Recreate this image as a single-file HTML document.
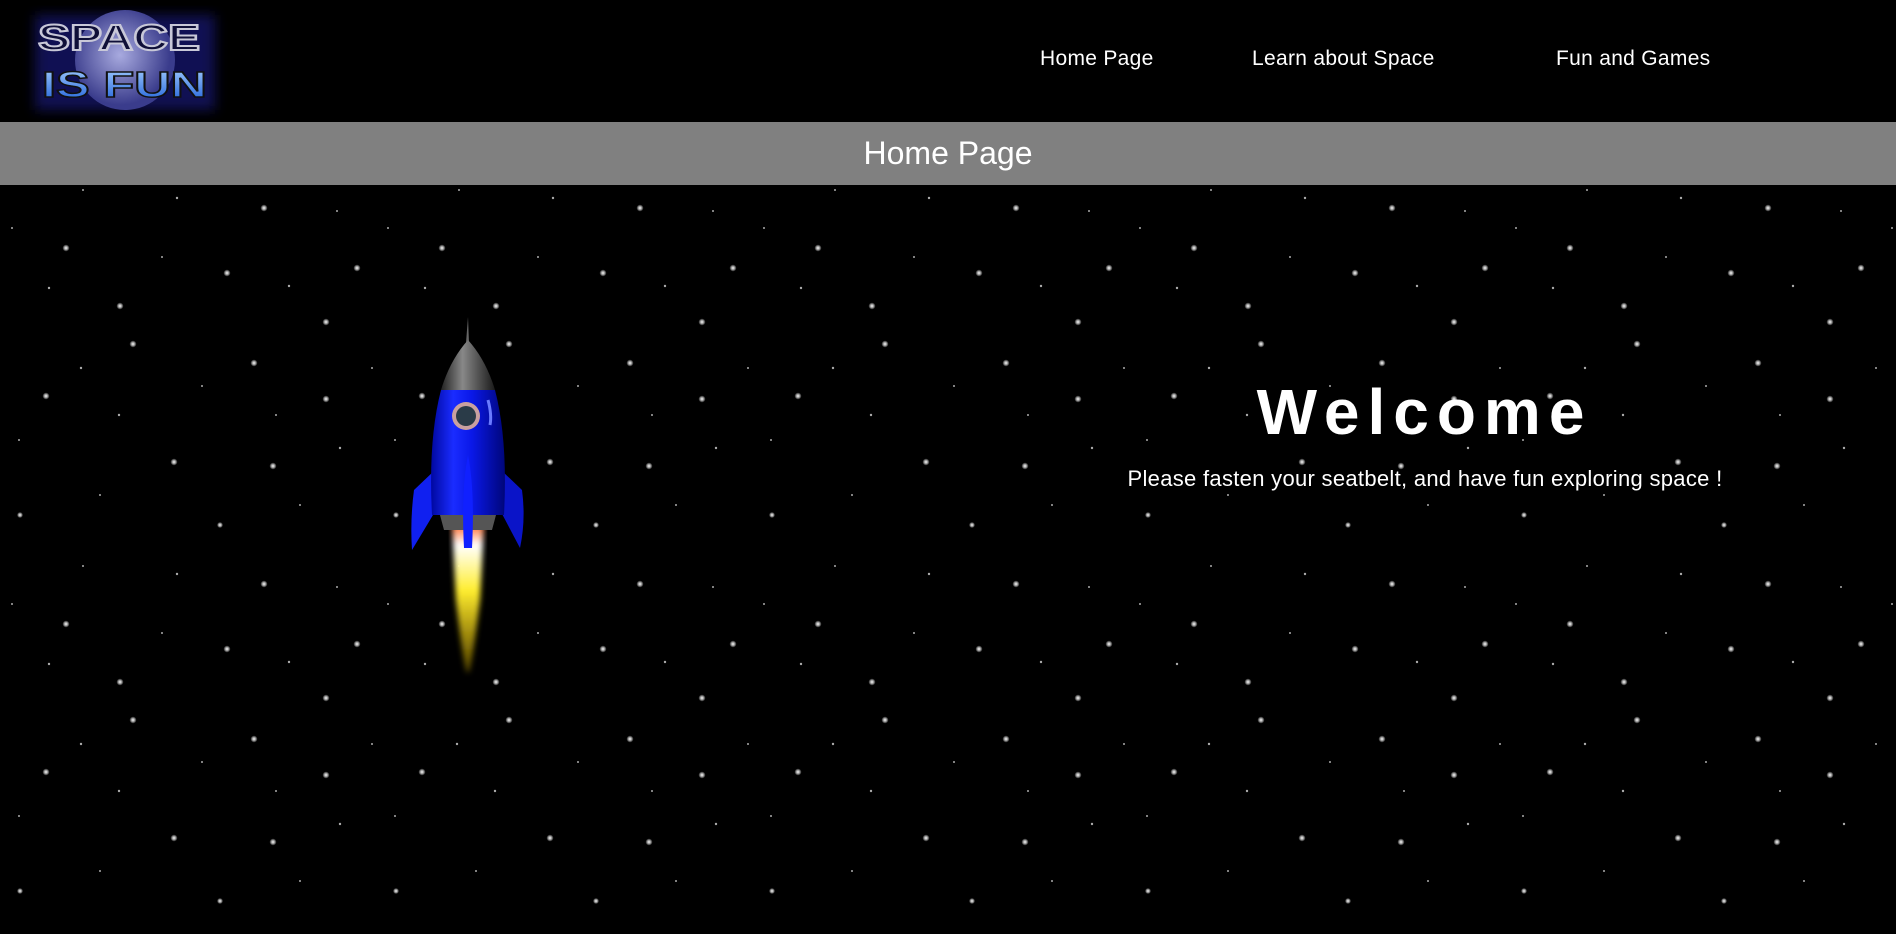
<!DOCTYPE html>
<html><head><meta charset="utf-8"><style>
html,body{margin:0;padding:0;width:1896px;height:934px;overflow:hidden;background:#000;font-family:"Liberation Sans",sans-serif;color:#fff}
.hdr{position:absolute;left:0;top:0;width:1896px;height:122px;background:#000}
.nav{position:absolute;top:47px;font-size:21px;white-space:nowrap;letter-spacing:0.3px}
.bar{position:absolute;left:0;top:122px;width:1896px;height:63px;background:#808080;text-align:center;font-size:32px;line-height:63px}
.space{position:absolute;left:0;top:185px;width:1896px;height:749px}
.wel{position:absolute;left:1233px;top:372px;width:383px;text-align:center;font-size:64px;letter-spacing:8px;font-weight:bold;line-height:80px}
.sub{position:absolute;left:1100px;top:466px;width:650px;text-align:center;font-size:22px;white-space:nowrap;letter-spacing:0.3px}
</style></head><body>
<svg class="space" width="1896" height="749" viewBox="0 0 1896 749">
<defs>
<radialGradient id="st"><stop offset="0" stop-color="#fff"/><stop offset="0.5" stop-color="#ddd" stop-opacity=".7"/><stop offset="1" stop-color="#fff" stop-opacity="0"/></radialGradient>
<pattern id="sp" width="376" height="376" patternUnits="userSpaceOnUse" x="0" y="-10">
<g fill="url(#st)">
<circle cx="66" cy="73" r="3.5"/><circle cx="264" cy="33" r="3.5"/><circle cx="227" cy="98" r="3.5"/><circle cx="120" cy="131" r="3.5"/><circle cx="133" cy="169" r="3.5"/><circle cx="326" cy="147" r="3.5"/><circle cx="254" cy="188" r="3.5"/><circle cx="46" cy="221" r="3.5"/><circle cx="326" cy="224" r="3.5"/><circle cx="174" cy="287" r="3.5"/><circle cx="273" cy="291" r="3.5"/><circle cx="357" cy="93" r="3.5"/><circle cx="20" cy="340" r="3"/><circle cx="220" cy="350" r="3"/>
</g>
<g fill="#aaa">
<circle cx="83" cy="15" r="1"/><circle cx="177" cy="23" r="1.2"/><circle cx="12" cy="53" r="1"/><circle cx="337" cy="36" r="1"/><circle cx="162" cy="82" r="1"/><circle cx="49" cy="113" r="1.2"/><circle cx="289" cy="111" r="1.2"/><circle cx="81" cy="193" r="1.2"/><circle cx="202" cy="211" r="1"/><circle cx="119" cy="240" r="1.2"/><circle cx="276" cy="240" r="1"/><circle cx="19" cy="265" r="1"/><circle cx="340" cy="273" r="1.2"/><circle cx="372" cy="193" r="1"/><circle cx="100" cy="320" r="1"/><circle cx="300" cy="330" r="1"/>
</g>
</pattern>
<linearGradient id="body" x1="0" x2="1"><stop offset="0" stop-color="#0008a0"/><stop offset=".3" stop-color="#1a2cff"/><stop offset=".55" stop-color="#0a18e8"/><stop offset="1" stop-color="#00067a"/></linearGradient>
<linearGradient id="cone" x1="0" x2="1"><stop offset="0" stop-color="#222"/><stop offset=".4" stop-color="#888"/><stop offset="1" stop-color="#1a1a1a"/></linearGradient>
<linearGradient id="fl" x1="0" y1="0" x2="0" y2="1"><stop offset="0" stop-color="#ff5a10"/><stop offset=".15" stop-color="#fff"/><stop offset=".45" stop-color="#ffee30"/><stop offset="1" stop-color="#ffd000" stop-opacity=".3"/></linearGradient>
<filter id="bl"><feGaussianBlur stdDeviation="3"/></filter>
</defs>
<rect width="1896" height="749" fill="url(#sp)"/>
<g transform="translate(0,-185)">
<path d="M452 525 Q468 520 484 525 L480 600 Q470 680 468 672 Q465 680 456 600 Z" fill="url(#fl)" filter="url(#bl)"/>
<path d="M435 470 L414 490 Q410 520 412 550 L436 510 Z" fill="#1020f0"/>
<path d="M501 470 L522 490 Q526 520 520 548 L500 510 Z" fill="#0a14c8"/>
<path d="M468 317 L469 343 L466 343 Z" fill="#666"/>
<path d="M468 340 Q450 360 441 390 L495 390 Q486 360 468 340 Z" fill="url(#cone)"/>
<path d="M441 390 Q428 440 432 515 L504 515 Q508 440 495 390 Z" fill="url(#body)"/>
<path d="M440 515 L496 515 L492 530 L444 530 Z" fill="#555"/>
<path d="M468 455 Q461 490 464 548 L472 548 Q475 490 468 455 Z" fill="#1020ff"/>
<circle cx="466" cy="416" r="14" fill="#c9a0a0"/><circle cx="466" cy="416" r="10" fill="#2a3b48"/>
<path d="M488 400 Q492 415 490 425" stroke="#6a7bff" stroke-width="3" fill="none"/>
</g>
</svg>
<div class="hdr">
<svg width="240" height="122" style="position:absolute;left:0;top:0">
<defs><radialGradient id="pl" cx=".45" cy=".45"><stop offset="0" stop-color="#a8aadf"/><stop offset="1" stop-color="#3a3c8c"/></radialGradient>
<linearGradient id="bt" x1="0" y1="0" x2="0" y2="1"><stop offset="0" stop-color="#a8d0ff"/><stop offset="1" stop-color="#1b5ed8"/></linearGradient>
<filter id="gl"><feGaussianBlur stdDeviation="6"/></filter></defs>
<rect x="35" y="15" width="180" height="95" fill="#1a1a8a" filter="url(#gl)" opacity=".6"/>
<circle cx="125" cy="60" r="50" fill="url(#pl)"/>
<text x="38" y="50" font-family="Liberation Sans" font-weight="bold" font-size="36" fill="#0f0f38" stroke="#c8c8d8" stroke-width="2" textLength="162" lengthAdjust="spacingAndGlyphs">SPACE</text>
<text x="42" y="97" font-family="Liberation Sans" font-weight="bold" font-size="36" fill="url(#bt)" stroke="#111" stroke-width="1.5" textLength="165" lengthAdjust="spacingAndGlyphs">IS FUN</text>
</svg>
<div class="nav" style="left:1040px">Home Page</div>
<div class="nav" style="left:1252px">Learn about Space</div>
<div class="nav" style="left:1556px">Fun and Games</div>
</div>
<div class="bar">Home Page</div>
<div class="wel">Welcome</div>
<div class="sub">Please fasten your seatbelt, and have fun exploring space !</div>
</body></html>
